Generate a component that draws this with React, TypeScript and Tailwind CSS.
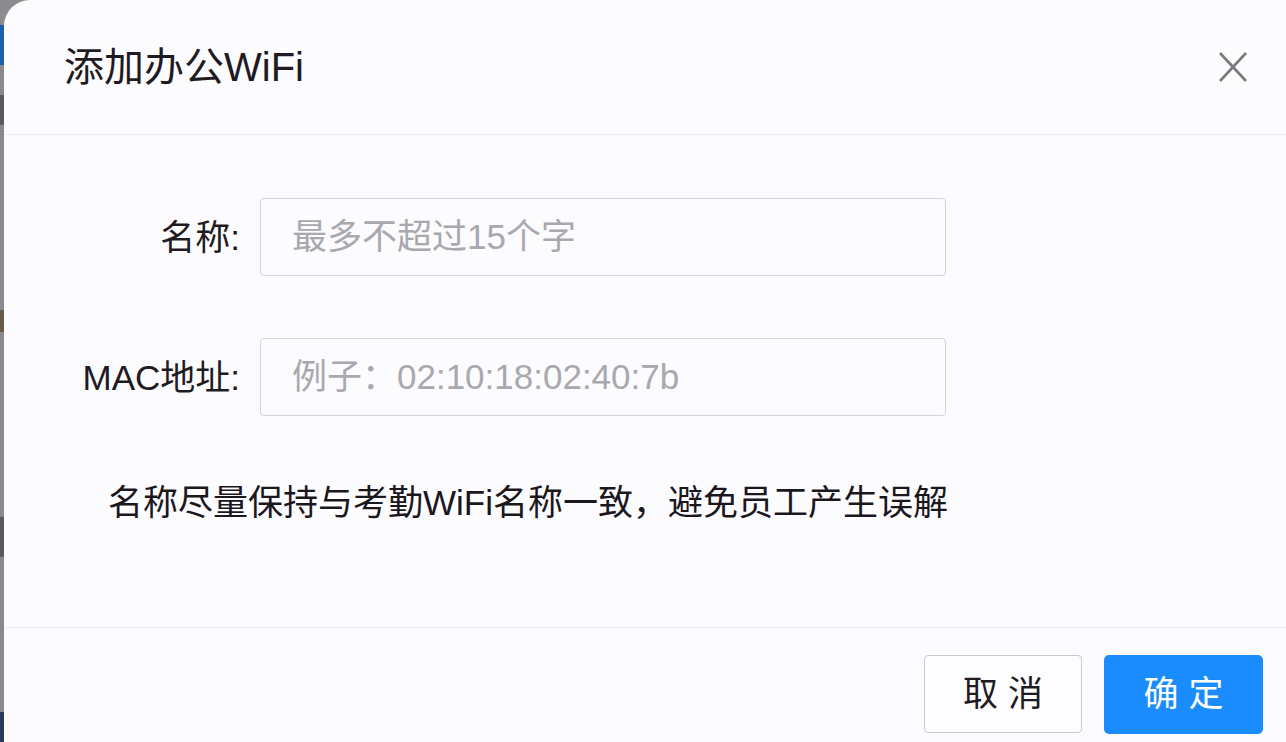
import React from "react";

export default function App() {
  const font = {
    fontFamily: '"Liberation Sans", "Noto Sans CJK SC", sans-serif',
  };
  return (
    <div
      className="w-[1286px] h-[742px] flex bg-[#8c8c8e] overflow-hidden"
      style={font}
    >
      {/* page behind the dialog */}
      <div className="w-[4px] flex flex-col shrink-0">
        <div className="h-[25px] bg-[#8c8c8e]" />
        <div className="h-[40px] bg-[#1e5fae]" />
        <div className="h-[30px] bg-[#8a8a8c]" />
        <div className="h-[30px] bg-[#5a5a5c]" />
        <div className="h-[185px] bg-[#8a8a8c]" />
        <div className="h-[22px] bg-[#6a5a4a]" />
        <div className="h-[185px] bg-[#8a8a8c]" />
        <div className="h-[40px] bg-[#5a5a5c]" />
        <div className="h-[155px] bg-[#8a8a8c]" />
        <div className="flex-1 bg-[#2a3a5a]" />
      </div>

      {/* dialog */}
      <div className="flex-1 flex flex-col bg-[#fcfbfd] rounded-tl-[26px]">
        {/* header */}
        <div className="h-[135px] shrink-0 flex items-center justify-between pl-[60px] pr-[38px] border-b border-[#ecebef]">
          <h1 className="text-[40px] leading-none text-[#1f1b23]">添加办公WiFi</h1>
          <svg width="30" height="32" viewBox="0 0 30 32" className="text-[#7a7a7c]">
            <line x1="2" y1="2" x2="28" y2="30" stroke="currentColor" strokeWidth="2.6" />
            <line x1="28" y1="2" x2="2" y2="30" stroke="currentColor" strokeWidth="2.6" />
          </svg>
        </div>

        {/* body */}
        <div className="h-[493px] shrink-0 flex flex-col pt-[63px] border-b border-[#ecebef]">
          <div className="flex flex-col gap-[62px]">
            <div className="flex items-center h-[78px]">
              <label className="w-[236px] text-right text-[35px] leading-none text-[#1f1b23]">
                名称:
              </label>
              <input
                className="ml-[20px] w-[686px] h-[78px] border border-[#d3d2d6] rounded-[4px] bg-[#fcfbfd] pl-[31px] text-[35px] outline-none placeholder:text-[#a9a8ae]"
                placeholder="最多不超过15个字"
              />
            </div>
            <div className="flex items-center h-[78px]">
              <label className="w-[236px] text-right text-[35px] leading-none text-[#1f1b23]">
                MAC地址:
              </label>
              <input
                className="ml-[20px] w-[686px] h-[78px] border border-[#d3d2d6] rounded-[4px] bg-[#fcfbfd] pl-[31px] text-[35px] outline-none placeholder:text-[#a9a8ae]"
                placeholder="例子：02:10:18:02:40:7b"
              />
            </div>
          </div>
          <p className="mt-[62px] pl-[104px] text-[35px] leading-[50px] text-[#1a171d]">
            名称尽量保持与考勤WiFi名称一致，避免员工产生误解
          </p>
        </div>

        {/* footer */}
        <div className="flex justify-end gap-[22px] pt-[27px] pr-[23px]">
          <button className="w-[158px] h-[78px] border border-[#cac9cd] rounded-[4px] bg-[#fdfcfe] text-[35px] text-[#1f1b23] tracking-[10px] pl-[10px]">
            取消
          </button>
          <button className="w-[159px] h-[79px] rounded-[5px] bg-[#1a8cfd] text-[35px] text-white tracking-[10px] pl-[10px]">
            确定
          </button>
        </div>
      </div>
    </div>
  );
}
